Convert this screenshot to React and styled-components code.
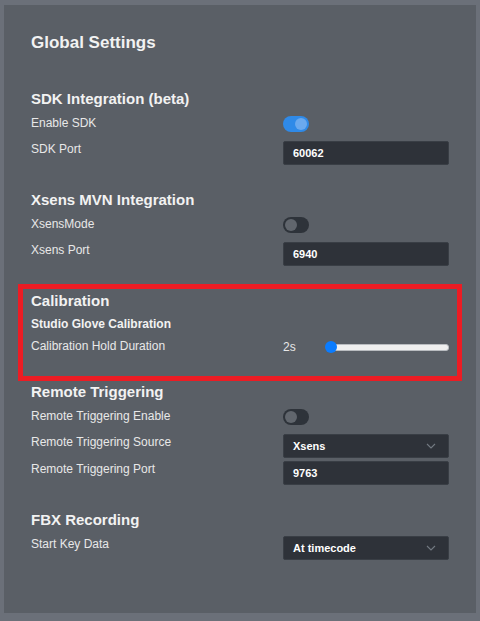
import React from "react"
import styled, { createGlobalStyle } from "styled-components"

const Global = createGlobalStyle`
  html, body {
    margin: 0;
    padding: 0;
    background: #6b7079;
  }
  body {
    font-family: "Liberation Sans", Arial, sans-serif;
  }
`

const Chevron = () => (
  <svg width="10" height="6" viewBox="0 0 10 6" aria-hidden="true">
    <path d="M1 1l4 4 4-4" fill="none" stroke="#737a82" strokeWidth="1.1" />
  </svg>
)

export default () => (
  <>
    <Global />
    <Page>
      <Panel>
        <Title>Global Settings</Title>
        <Sections>
          <Section>
            <Heading>SDK Integration (beta)</Heading>
            <Row>
              <Label>Enable SDK</Label>
              <Toggle on />
            </Row>
            <Row>
              <Label>SDK Port</Label>
              <Field>60062</Field>
            </Row>
          </Section>

          <Section>
            <Heading>Xsens MVN Integration</Heading>
            <Row>
              <Label>XsensMode</Label>
              <Toggle />
            </Row>
            <Row>
              <Label>Xsens Port</Label>
              <Field>6940</Field>
            </Row>
          </Section>

          <Highlight>
            <Heading>Calibration</Heading>
            <SubHeading>Studio Glove Calibration</SubHeading>
            <Row>
              <Label>Calibration Hold Duration</Label>
              <SliderWrap>
                <Value>2s</Value>
                <Slider>
                  <Thumb />
                </Slider>
              </SliderWrap>
            </Row>
          </Highlight>

          <Section>
            <Heading>Remote Triggering</Heading>
            <Row>
              <Label>Remote Triggering Enable</Label>
              <Toggle />
            </Row>
            <Row>
              <Label>Remote Triggering Source</Label>
              <Field>
                Xsens
                <Chevron />
              </Field>
            </Row>
            <Row>
              <Label>Remote Triggering Port</Label>
              <Field>9763</Field>
            </Row>
          </Section>

          <Section>
            <Heading>FBX Recording</Heading>
            <Row>
              <Label>Start Key Data</Label>
              <Field>
                At timecode
                <Chevron />
              </Field>
            </Row>
          </Section>
        </Sections>
      </Panel>
    </Page>
  </>
)

const Page = styled.div`
  padding: 5px 4px 8px 4px;
`

const Panel = styled.div`
  background: #5a5f66;
  min-height: 608px;
  box-sizing: border-box;
  padding: 28px 27px 40px 27px;
  color: #ececec;
`

const Title = styled.h1`
  margin: 0 0 37px;
  font-size: 17px;
  line-height: 20px;
  font-weight: bold;
  color: #f2f2f2;
`

const Sections = styled.div`
  display: flex;
  flex-direction: column;
  gap: 23px;
`

const Section = styled.div`
  display: flex;
  flex-direction: column;
`

const Highlight = styled(Section)`
  margin: -8px -13px -21px;
  padding: 3px 8px 12px;
  border: 5px solid #ec1c24;
`

const Heading = styled.h2`
  margin: 0 0 7px;
  font-size: 15px;
  line-height: 18px;
  font-weight: bold;
  color: #f2f2f2;
`

const SubHeading = styled.h3`
  margin: 0 0 7px;
  font-size: 12px;
  line-height: 14px;
  font-weight: bold;
  color: #f2f2f2;
`

const Row = styled.div`
  display: grid;
  grid-template-columns: 1fr 166px;
  align-items: start;
  min-height: 26px;
`

const Label = styled.span`
  font-size: 12px;
  line-height: 16px;
  color: #e8e8e8;
`

const Toggle = styled.span`
  position: relative;
  display: block;
  width: 26px;
  height: 16px;
  margin-top: 1px;
  border-radius: 8px;
  background: ${(p) => (p.on ? "#2f8ae8" : "#2e333a")};

  &::after {
    content: "";
    position: absolute;
    top: 2px;
    left: ${(p) => (p.on ? "12px" : "2px")};
    width: 12px;
    height: 12px;
    border-radius: 50%;
    background: ${(p) => (p.on ? "#6ba9ee" : "#61666d")};
  }
`

const Field = styled.div`
  display: flex;
  align-items: center;
  justify-content: space-between;
  box-sizing: border-box;
  height: 24px;
  margin-bottom: 3px;
  padding: 0 12px 0 9px;
  background: #2e3239;
  border: 1px solid #393e45;
  border-radius: 2px;
  font-size: 11px;
  font-weight: bold;
  color: #ffffff;
`

const SliderWrap = styled.div`
  display: flex;
  align-items: center;
  height: 18px;
`

const Value = styled.span`
  width: 42px;
  font-size: 12px;
  color: #e8e8e8;
`

const Slider = styled.div`
  position: relative;
  flex: 1;
  height: 5px;
  margin-left: 6px;
  border-radius: 3px;
  background: #efefef;
  border: 1px solid #b9bcc0;
`

const Thumb = styled.span`
  position: absolute;
  left: -7px;
  top: 50%;
  width: 12px;
  height: 12px;
  margin-top: -6px;
  border-radius: 50%;
  background: #0a7cff;
`
